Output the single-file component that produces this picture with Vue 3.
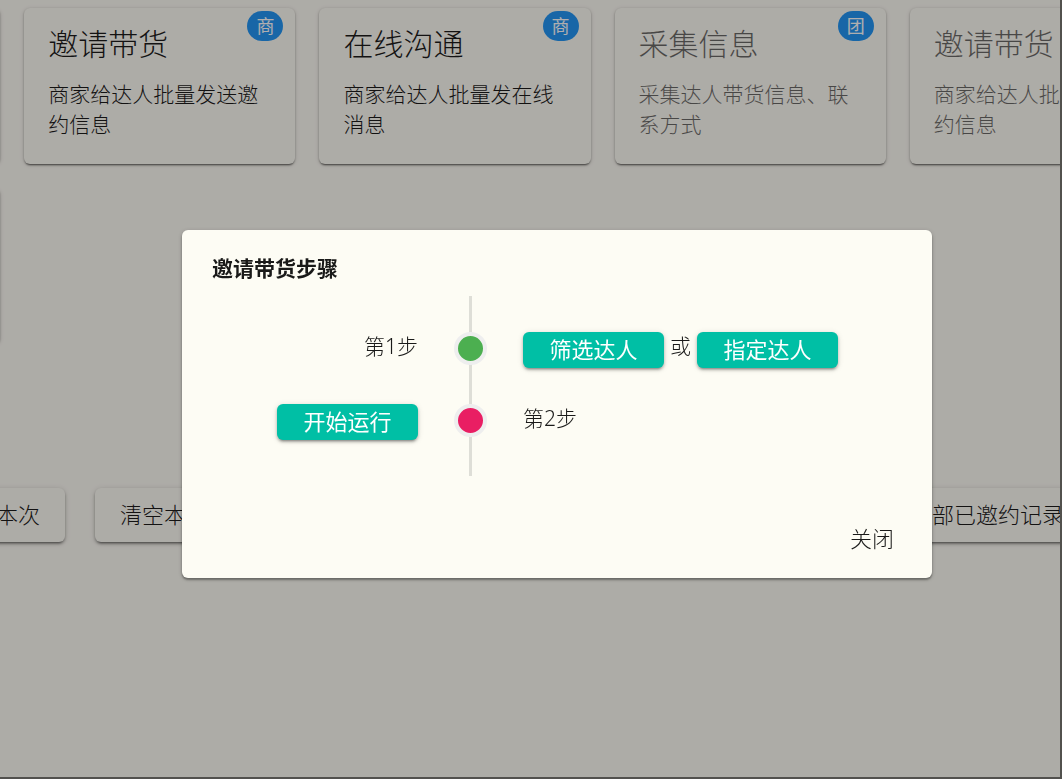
<template>
  <div class="page">
    <div class="cards">
      <div v-for="(card, i) in cards" :key="i" class="card" :class="{ disabled: card.disabled }">
        <template v-if="card.title">
          <span v-if="card.badge" class="badge">{{ card.badge }}</span>
          <h2>{{ card.title }}</h2>
          <p>{{ card.text }}</p>
        </template>
      </div>
    </div>
    <div class="actions">
      <button v-for="label in actions" :key="label" type="button" class="btn">{{ label }}</button>
    </div>
  </div>

  <div v-if="open" class="overlay">
    <div class="dialog" role="dialog" aria-labelledby="dialog-title">
      <h3 id="dialog-title">邀请带货步骤</h3>
      <div class="timeline">
        <div class="step">
          <div class="before">第1步</div>
          <div class="dot green"></div>
          <div class="after">
            <button type="button" class="go">筛选达人</button>
            <span>或</span>
            <button type="button" class="go">指定达人</button>
          </div>
        </div>
        <div class="step">
          <div class="before"><button type="button" class="go">开始运行</button></div>
          <div class="dot pink"></div>
          <div class="after">第2步</div>
        </div>
      </div>
      <div class="footer">
        <button type="button" class="close" @click="open = false">关闭</button>
      </div>
    </div>
  </div>
</template>

<script setup>
import { ref } from 'vue'

const open = ref(true)
const cards = [
  {},
  { title: '邀请带货', text: '商家给达人批量发送邀约信息', badge: '商' },
  { title: '在线沟通', text: '商家给达人批量发在线消息', badge: '商' },
  { title: '采集信息', text: '采集达人带货信息、联系方式', badge: '团', disabled: true },
  { title: '邀请带货', text: '商家给达人批量发送邀约信息', disabled: true },
  {}
]
const actions = ['运行本次', '清空本次', '清空全部已邀约记录']
</script>

<style>
body { margin: 0; background: #fdfcf4; }
</style>

<style scoped>
.page, .overlay { font-family: "Noto Sans", "Noto Sans CJK SC", sans-serif; font-size: 21px; font-weight: 300; line-height: 28px; color: #1a1a19; box-sizing: border-box; }
.page { min-height: 100vh; padding-top: 8px; overflow: hidden; background: #fdfcf4; border-right: 2px solid #777770; border-bottom: 2px solid #777770; }
h2, h3, p { margin: 0; }
button { font: inherit; color: inherit; border: 0; white-space: nowrap; cursor: pointer; }

/* both strips run past the window on either side */
.cards { display: grid; grid-template-columns: repeat(5, 1fr); gap: 24px; margin: 0 -121px 0 -271px; }
.card { position: relative; box-sizing: border-box; min-height: 156px; padding: 12px 24px 24px; border-radius: 6px; background: #fdfcf4; box-shadow: 0 3px 2px -2px rgba(0, 0, 0, 0.4), 0 1px 2px rgba(0, 0, 0, 0.3), 0 1px 5px rgba(0, 0, 0, 0.14); }
.card h2 { font-size: 30px; line-height: 48px; font-weight: 300; margin-bottom: 11px; }
.card p { line-height: 30px; }
.disabled h2, .disabled p { opacity: 0.65; }
.badge { position: absolute; top: 3px; right: 12px; width: 36px; height: 30px; border-radius: 15px; background: #2196f3; color: #fff; font-size: 18px; font-weight: 400; line-height: 30px; text-align: center; }

.actions { display: flex; gap: 30px; margin: 144px -29px 0 -73px; }
.btn { height: 54px; padding: 0 25px 2px; border-radius: 6px; background: #fdfcf4; font-size: 22px; box-shadow: 0 4px 2px -3px rgba(0, 0, 0, 0.3), 0 2px 3px rgba(0, 0, 0, 0.3), 0 1px 6px rgba(0, 0, 0, 0.14); }
.btn:last-child { margin-left: auto; }

.overlay { position: fixed; inset: 0; display: flex; align-items: center; justify-content: center; padding: 29px 0 0 52px; background: rgba(7, 2, 6, 0.32); }
.dialog { width: 100%; max-width: 750px; border-radius: 6px; background: #fdfcf4; box-shadow: 0 2px 2px rgba(0, 0, 0, 0.3), 0 1px 4px rgba(0, 0, 0, 0.2); }
.dialog h3 { padding: 24px 30px 14px; font-size: 21px; font-weight: 700; }

.timeline { position: relative; display: grid; gap: 36px; padding: 36px 0; }
.timeline::before { content: ""; position: absolute; left: 287px; top: 0; bottom: 0; width: 3px; background: #deded7; }
.step { position: relative; display: grid; grid-template-columns: 236px 105px 1fr; min-height: 36px; }
.before { display: flex; justify-content: flex-end; }
.after { display: flex; gap: 6px; }
.dot { justify-self: center; box-sizing: border-box; width: 33px; height: 33px; border: 4px solid #eee; border-radius: 50%; }
.green { background: #4caf50; }
.pink { background: #e91e63; }
.go { min-width: 141px; height: 36px; padding: 0 24px 2px; border-radius: 6px; background: #00bfa5; color: #fff; font-size: 22px; font-weight: 400; box-shadow: 0 4px 2px -3px rgba(0, 0, 0, 0.2), 0 2px 3px rgba(0, 0, 0, 0.25), 0 1px 6px rgba(0, 0, 0, 0.12); }

.footer { display: flex; justify-content: flex-end; margin-top: 24px; padding: 12px; }
.close { height: 54px; padding: 0 26px 2px; background: none; border-radius: 6px; font-size: 22px; }
</style>
